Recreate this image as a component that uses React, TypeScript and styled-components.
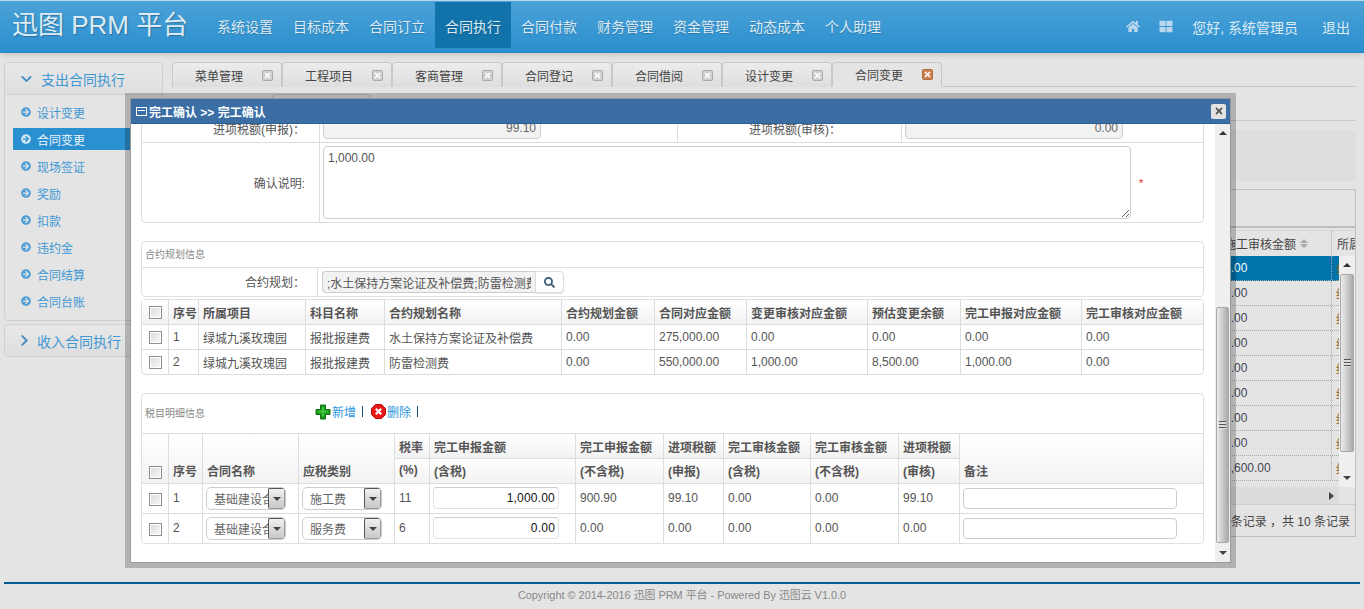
import React from "react";
import styled, { createGlobalStyle } from "styled-components";
import { FaChevronDown, FaChevronRight, FaArrowCircleRight, FaHome, FaThLarge, FaSearch, FaTimes } from "react-icons/fa";

const Global = createGlobalStyle`
  html, body { margin: 0; padding: 0; height: 100%; overflow: hidden; background: #e4e4e4; }
  body, input, textarea { font-family: "Liberation Sans", "Noto Sans CJK SC", sans-serif; font-size: 12px; color: #555; }
  * { box-sizing: border-box; }
`;

const Page = styled.div`
  position: relative; width: 1364px; height: 609px; display: flex; flex-direction: column; overflow: hidden;
`;

/* ---------- header ---------- */
const Header = styled.header`
  height: 53px; flex: none; display: flex; align-items: flex-start; color: #dcebf5;
  border-top: 1px solid #b7d7ec; border-bottom: 1px solid #2388c6;
  background: linear-gradient(#4ba2d7, #2b8fcf);
  box-shadow: 0 2px 6px rgba(0,0,0,.12);
`;
const Logo = styled.div`
  width: 207px; padding: 8px 0 0 12px; font-size: 26px; line-height: 32px; color: #dcebf5; white-space: nowrap;
  text-shadow: 1px 1px 1px rgba(0,0,0,.25);
`;
const Nav = styled.nav`display: flex; margin-top: 1px;`;
const NavItem = styled.a<{ $active?: boolean }>`
  width: 76px; height: 46px; line-height: 50px; text-align: center; font-size: 14px; white-space: nowrap;
  background: ${p => (p.$active ? "#1273aa" : "transparent")};
  text-shadow: 0 1px 1px rgba(0,0,0,.2);
`;
const UserBar = styled.div`
  margin-left: auto; height: 46px; display: flex; align-items: center; gap: 0; font-size: 14px; padding: 5px 14px 0 0;
  svg { color: #b9d8ee; }
`;
const HomeIcon = styled(FaHome)`width: 14px; height: 13px; margin-right: 19px;`;
const GridIcon = styled(FaThLarge)`width: 14px; height: 13px; margin-right: 19px;`;
const Hello = styled.span`margin-right: 24px;`;

/* ---------- main area ---------- */
const Body = styled.div`flex: none; height: 520px; display: flex; padding: 9px 8px 0 4px;`;

const Sidebar = styled.aside`width: 159px; flex: none; display: flex; flex-direction: column; gap: 3px;`;
const Panel = styled.div`border: 1px solid #cfcfcf; border-radius: 4px; overflow: hidden;`;
const PanelHead = styled.div<{ $open?: boolean }>`
  height: ${p => (p.$open ? "32px" : "31px")}; display: flex; align-items: center; font-size: 14px; color: #3f98d4;
  padding-left: 15px;
  background: linear-gradient(#e8e8e8, #dedede);
  ${p => p.$open && "border-bottom: 1px solid #d0d0d0;"}
  svg { color: #4b90c2; flex: none; }
`;
const OpenChevron = styled(FaChevronDown)`width: 13px; height: 12px; margin-right: 8px;`;
const ClosedChevron = styled(FaChevronRight)`width: 9px; height: 13px; margin-right: 8px;`;
const SideList = styled.ul`list-style: none; margin: 0; padding: 6px 0 8px 8px;`;
const SideItem = styled.li<{ $active?: boolean }>`
  height: 22px; margin-bottom: 5px; padding-left: 8px; display: flex; align-items: center; gap: 6px;
  color: ${p => (p.$active ? "#eaf4fb" : "#3f98d4")};
  background: ${p => (p.$active ? "#2a90cf" : "transparent")};
  svg { width: 10px; height: 10px; color: ${p => (p.$active ? "#cfe4f3" : "#4f9fd6")}; flex: none; }
  &:last-child { margin-bottom: 0; }
`;

const Content = styled.main`flex: 1; min-width: 0; margin-left: 9px; display: flex; flex-direction: column;`;
const TabStrip = styled.div`height: 25px; display: flex; border-bottom: 1px solid #c8c8c8; flex: none;`;
const Tab = styled.div<{ $active?: boolean }>`
  width: 110px; height: 25px; display: flex; align-items: center; justify-content: space-between;
  padding: 0 8px 0 22px; color: #444; font-size: 12px;
  border: 1px solid #c8c8c8; border-radius: 4px 4px 0 0;
  ${p => (p.$active
    ? "border-bottom-color: #e4e4e4; background: #e4e4e4;"
    : "border-left-width: 1px; border-bottom: 0; background: linear-gradient(#ececec, #dedede);")}
`;
const SubStrip = styled.div`height: 34px; flex: none; padding: 7px 0 0 100px; border-bottom: 1px solid #c8c8c8;`;
const SubTab = styled.div`width: 98px; height: 26px; border: 1px solid #c8c8c8; border-bottom: 0; border-radius: 4px 4px 0 0;`;
const SearchPanel = styled.div`height: 51px; flex: none; margin-top: 9px; background: #dedede; border-radius: 4px;`;
const GridBox = styled.section`
  margin-top: 8px; height: 348px; flex: none; border: 1px solid #c0c0c0; display: flex; flex-direction: column;
`;
const GridBar = styled.div`height: 38px; flex: none; border-bottom: 2px solid #bdbdbd;`;
const GridHead = styled.div`
  margin-top: 2px; height: 26px; flex: none; display: flex; justify-content: flex-end; align-items: center;
  border-top: 1px solid #d8d8d8; color: #444; white-space: nowrap;
`;
const AmountHead = styled.div`width: 110px; height: 100%; padding-left: 2px; display: flex; align-items: center; gap: 4px; border-right: 1px dotted #aaa;`;
const OwnerHead = styled.div`width: 23px; padding-left: 5px; overflow: hidden;`;
const SortMark = styled.span`
  display: inline-block; width: 8px; height: 9px; position: relative;
  &::before, &::after { content: ""; position: absolute; left: 0; border: 4px solid transparent; }
  &::before { top: -4px; border-bottom-color: #aaa; }
  &::after { bottom: -4px; border-top-color: #aaa; }
`;
const GridBody = styled.div`height: 231px; flex: none; display: flex;`;
const GridRows = styled.div`flex: 1; min-width: 0; overflow: hidden;`;
const GridRow = styled.div<{ $active?: boolean }>`
  height: 25px; display: flex; justify-content: flex-end; align-items: center; border-bottom: 1px dotted #aaa;
  white-space: nowrap; color: ${p => (p.$active ? "#fff" : "#445")};
  background: ${p => (p.$active ? "#0073ad" : "transparent")};
`;
const AmountCell = styled.div`width: 110px; height: 100%; line-height: 24px; padding-left: 2px; border-right: 1px dotted #aaa;`;
const OwnerCell = styled.div`width: 7px; padding-left: 4px; overflow: hidden; color: #8a6a30;`;
const HScroll = styled.div`
  height: 17px; flex: none; width: calc(100% - 16px); background: #dcdcdc; display: flex; justify-content: flex-end; align-items: center; padding-right: 5px;
`;
const GridFoot = styled.div`
  flex: 1; border-top: 1px solid #cfcfcf; display: flex; justify-content: flex-end; align-items: center;
  padding-right: 5px; font-size: 12px; color: #444;
`;

/* ---------- scrollbars ---------- */
const VScroll = styled.div<{ $w: number }>`
  width: ${p => p.$w}px; flex: none; display: flex; flex-direction: column; background: #efefef;
`;
const ScrollBtn = styled.div`height: 18px; flex: none; display: flex; align-items: center; justify-content: center;`;
const Up = styled.i`width: 0; height: 0; border: 4px solid transparent; border-top: 0; border-bottom: 4px solid #333;`;
const Down = styled.i`width: 0; height: 0; border: 4px solid transparent; border-bottom: 0; border-top: 4px solid #444;`;
const Right = styled.i`width: 0; height: 0; border: 4px solid transparent; border-right: 0; border-left: 5px solid #444;`;
const Track = styled.div<{ $before: number }>`flex: 1; padding-top: ${p => p.$before}px; display: flex; flex-direction: column; min-height: 0;`;
const Thumb = styled.div<{ $h: number }>`
  height: ${p => p.$h}px; flex: none; border: 1px solid #a8a8a8; border-radius: 2px; margin: 0 1px;
  display: flex; align-items: center; justify-content: center;
  background: linear-gradient(90deg, #ececec, #c8c8c8 55%, #a9a9a9);
`;
const Grip = styled.i`
  width: 7px; height: 8px;
  background: repeating-linear-gradient(#555 0 1px, #ddd 1px 3px);
`;

/* ---------- dialog ---------- */
const Dialog = styled.div`
  position: absolute; left: 125px; top: 93px; width: 1111px; height: 475px; display: flex; flex-direction: column;
  border: 5px solid rgba(0,0,0,.22); background-clip: padding-box; background-color: #fff;
`;
const DialogFrame = styled.div`flex: 1; min-height: 0; border: 1px solid #999; display: flex; flex-direction: column; background: #fff;`;
const DialogTitle = styled.div`
  height: 25px; flex: none; display: flex; align-items: center; gap: 2px; padding: 0 4px 0 5px;
  background: #3a6ea5; color: #fff; font-weight: bold; border-bottom: 1px solid #2f5f92;
`;
const CloseBtn = styled.div`
  margin-left: auto; width: 15px; height: 15px; border-radius: 2px; background: #e2e2e2; display: flex; align-items: center; justify-content: center;
  svg { width: 10px; height: 10px; color: #555; }
`;
const DialogBody = styled.div`flex: 1; min-height: 0; display: flex;`;
const Scroller = styled.div`flex: 1; min-width: 0; overflow: hidden; padding: 0 11px 0 10px;`;

const FormTable = styled.table`
  width: 1063px; table-layout: fixed; border-collapse: separate; border-spacing: 0;
  border: 1px solid #ddd; border-radius: 0 0 4px 4px; margin-top: -7px;
`;
const FormRow = styled.tr<{ $h: number }>`height: ${p => p.$h}px;`;
const LabelCell = styled.td<{ $pr?: number }>`
  text-align: right; padding-right: ${p => p.$pr ?? 14}px; border-right: 1px solid #ddd; border-bottom: 1px solid #ddd; white-space: nowrap; color: #555;
  tr:first-child > & { padding-bottom: 4px; }
  tr:last-child > & { border-bottom: 0; }
`;
const FieldCell = styled.td`
  padding: 0 3px 3px; border-right: 1px solid #ddd; border-bottom: 1px solid #ddd; white-space: nowrap;
  &:last-child { border-right: 0; }
  tr:last-child > & { border-bottom: 0; padding: 3px 3px; }
`;
const ReadOnlyInput = styled.input<{ $w: number }>`
  display: block; width: ${p => p.$w}px; height: 22px; margin-top: -1px; text-align: right; padding: 0 4px; outline: 0;
  background: #f2f2f2; border: 1px solid #d0d0d0; border-radius: 4px; color: #666;
`;
const NoteRow = styled.div`display: flex; align-items: center;`;
const NoteArea = styled.textarea`
  display: block; width: 808px; height: 73px; padding: 4px; outline: 0; background: #fff; color: #555;
  border: 1px solid #ccc; border-radius: 4px; line-height: 15px;
`;
const Star = styled.span`margin-left: 8px; color: #e22; font-size: 11px;`;

const Section = styled.div<{ $mt: number }>`
  width: 1063px; margin-top: ${p => p.$mt}px; border: 1px solid #e0e0e0; border-radius: 4px;
`;
const SectionHead = styled.div<{ $h: number }>`
  height: ${p => p.$h}px; display: flex; align-items: center; padding: 0 0 2px 3px; font-size: 10px; color: #888;
`;
const PlanRow = styled.div`height: 29px; display: flex; border-top: 1px solid #e0e0e0;`;
const PlanLabel = styled.div`
  width: 176px; flex: none; text-align: right; padding-right: 12px; line-height: 30px; border-right: 1px solid #e0e0e0;
`;
const PlanField = styled.div`display: flex; align-items: center; padding: 3px 0 3px 4px;`;
const PlanInput = styled.input`
  width: 213px; height: 22px; padding: 0 4px; outline: 0; background: #f2f2f2; color: #555;
  border: 1px solid #ccc; border-right: 0; border-radius: 4px 0 0 4px;
`;
const SearchBtn = styled.div`
  width: 29px; height: 22px; display: flex; align-items: center; justify-content: center; background: #fff;
  border: 1px solid #ddd; border-radius: 0 4px 4px 0; box-shadow: 0 1px 1px rgba(0,0,0,.1);
  svg { width: 11px; height: 11px; color: #3a5a70; }
`;

const DataTable = styled.table<{ $inner?: boolean }>`
  width: ${p => (p.$inner ? "1061px" : "1063px")}; table-layout: fixed; border-collapse: separate; border-spacing: 0;
  margin-top: ${p => (p.$inner ? "0" : "2px")};
  ${p => (p.$inner ? "border-top: 1px solid #ddd;" : "border: 1px solid #ddd; border-radius: 4px;")}
`;
const Th = styled.th<{ $bottom?: boolean }>`
  height: 25px; padding: 0 4px; text-align: left; font-weight: bold; color: #555; white-space: nowrap; overflow: hidden;
  vertical-align: ${p => (p.$bottom ? "bottom" : "middle")};
  ${p => p.$bottom && "padding-bottom: 4px;"}
  background: linear-gradient(#fff, #f2f2f2);
  border-right: 1px solid #ddd; border-bottom: 1px solid #ddd;
  &:last-child { border-right: 0; }
`;
const SubTh = styled(Th)`
  padding-bottom: 2px;
  &:last-child { border-right: 1px solid #ddd; }
`;
const Td = styled.td`
  padding: 0 4px; color: #555; white-space: nowrap; overflow: hidden;
  border-right: 1px solid #ddd; border-bottom: 1px solid #ddd;
  &:last-child { border-right: 0; }
  tr:last-child > & { border-bottom: 0; }
`;
const RaisedTd = styled(Td)`padding-bottom: 2px;`;
const Tr = styled.tr<{ $h: number }>`
  height: ${p => p.$h}px;
  &:last-child { height: ${p => p.$h - 1}px; }
`;
const Check = styled.input.attrs({ type: "checkbox" })`
  appearance: none; display: block; width: 13px; height: 13px; margin: 0 0 0 3px;
  border: 1px solid #8e8e8e; background: linear-gradient(135deg, #d9d9d9, #fafafa); box-shadow: inset 0 0 0 1px #fff;
`;
const RowCheck = styled(Check)`margin-top: 2px;`;
const Links = styled.div`display: flex; align-items: center; margin: 0 0 2px 110px; font-size: 12px; color: #2b96dd;`;
const LinkText = styled.span`margin-left: 1px;`;
const Bar = styled.span`width: 1px; height: 11px; background: #14507c; margin: 0 8px 0 6px;`;

const SelectBox = styled.div`
  width: 80px; height: 23px; margin-left: -1px; display: flex; border: 1px solid #ccc; border-radius: 5px; background: #fff; overflow: hidden;
`;
const SelectText = styled.div`flex: 1; min-width: 0; overflow: hidden; padding-left: 7px; line-height: 24px; color: #666; white-space: nowrap;`;
const SelectBtn = styled.div`
  width: 17px; flex: none; display: flex; align-items: center; justify-content: center;
  border: 1px solid #555; border-right-color: #999; border-bottom-color: #999; border-radius: 2px;
  background: linear-gradient(#f0f0f0, #c8c8c8);
`;
const NumberInput = styled.input`
  display: block; width: 126px; height: 22px; padding: 0 3px; text-align: right; outline: 0; color: #111; font-size: 12px; margin: -1px 0 0 -1px;
  border: 1px solid #dde3e8; border-top-color: #ccc; border-radius: 4px; background: #fff; letter-spacing: .2px;
`;
const RemarkInput = styled.input`
  display: block; width: 214px; height: 21px; padding: 0 4px; outline: 0; margin: -1px 0 0 -1px;
  border: 1px solid #ccc; border-radius: 4px; background: #fff;
`;

/* ---------- footer ---------- */
const Footer = styled.footer`
  margin: auto 4px 0; height: 27px; flex: none; border-top: 2px solid #005a94; text-align: center; line-height: 22px;
  font-size: 10.9px; color: #888;
`;

const TabClose = ({ active }: { active?: boolean }) => (
  <svg width="11" height="11" viewBox="0 0 11 11">
    <rect x=".5" y=".5" width="10" height="10" rx="1" fill={active ? "#c9814f" : "#cfcfcf"} stroke={active ? "#b06a38" : "#aaa"} />
    <path d="M3 3l5 5M8 3l-5 5" stroke="#fff" strokeWidth="1.6" />
  </svg>
);
const WinIcon = () => (
  <svg width="11" height="9" viewBox="0 0 11 9">
    <rect x=".5" y=".5" width="10" height="8" fill="none" stroke="#fff" />
    <path d="M2 3.5h7" stroke="#fff" />
  </svg>
);
const PlusIcon = () => (
  <svg width="16" height="16" viewBox="0 0 16 16">
    <path d="M5.5 1h5v4.5H15v5h-4.500V15h-5v-4.500H1v-5h4.500z" fill="#1d9a1d" stroke="#0d6e0d" strokeLinejoin="round" />
    <path d="M7 3h2v3.500h3.500v2H9V12H7V8.500H3.500v-2H7z" fill="#3cc53c" />
  </svg>
);
const DelIcon = () => (
  <svg width="15" height="15" viewBox="0 0 15 15">
    <path d="M4.500.5h6l4 4v6l-4 4h-6l-4-4v-6z" fill="#e81818" stroke="#b80d0d" />
    <path d="M4.800 4.800l5.400 5.400M10.200 4.800l-5.400 5.400" stroke="#fff" strokeWidth="2.200" />
  </svg>
);

const tabs = ["菜单管理", "工程项目", "客商管理", "合同登记", "合同借阅", "设计变更", "合同变更"];
const nav = ["系统设置", "目标成本", "合同订立", "合同执行", "合同付款", "财务管理", "资金管理", "动态成本", "个人助理"];
const side = ["设计变更", "合同变更", "现场签证", "奖励", "扣款", "违约金", "合同结算", "合同台账"];
const amounts = ["0.00", "0.00", "0.00", "0.00", "0.00", "0.00", "0.00", "0.00", "1,600.00"];

const planCols = [27, 30, 107, 79, 177, 93, 92, 121, 93, 121, 121];
const planHead = ["序号", "所属项目", "科目名称", "合约规划名称", "合约规划金额", "合同对应金额", "变更审核对应金额", "预估变更余额", "完工申报对应金额", "完工审核对应金额"];
const planRows = [
  ["1", "绿城九溪玫瑰园", "报批报建费", "水土保持方案论证及补偿费", "0.00", "275,000.00", "0.00", "0.00", "0.00", "0.00"],
  ["2", "绿城九溪玫瑰园", "报批报建费", "防雷检测费", "0.00", "550,000.00", "1,000.00", "8,500.00", "1,000.00", "0.00"],
];
const taxCols = [27, 34, 96, 96, 35, 146, 88, 60, 87, 88, 61, 243];
const taxTop = ["税率", "完工申报金额", "完工申报金额", "进项税额", "完工审核金额", "完工审核金额", "进项税额"];
const taxSub = ["(%)", "(含税)", "(不含税)", "(申报)", "(含税)", "(不含税)", "(审核)"];
const taxRows = [
  { no: "1", type: "施工费", rate: "11", amount: "1,000.00", vals: ["900.90", "99.10", "0.00", "0.00", "99.10"] },
  { no: "2", type: "服务费", rate: "6", amount: "0.00", vals: ["0.00", "0.00", "0.00", "0.00", "0.00"] },
];

const Select = ({ text }: { text: string }) => (
  <SelectBox>
    <SelectText>{text}</SelectText>
    <SelectBtn><Down /></SelectBtn>
  </SelectBox>
);

export default function App() {
  return (
    <Page>
      <Global />
      <Header>
        <Logo>迅图 PRM 平台</Logo>
        <Nav>
          {nav.map(n => <NavItem key={n} $active={n === "合同执行"}>{n}</NavItem>)}
        </Nav>
        <UserBar>
          <HomeIcon />
          <GridIcon />
          <Hello>您好, 系统管理员</Hello>
          <span>退出</span>
        </UserBar>
      </Header>

      <Body>
        <Sidebar>
          <Panel>
            <PanelHead $open><OpenChevron />支出合同执行</PanelHead>
            <SideList>
              {side.map(s => (
                <SideItem key={s} $active={s === "合同变更"}><FaArrowCircleRight />{s}</SideItem>
              ))}
            </SideList>
          </Panel>
          <Panel>
            <PanelHead><ClosedChevron />收入合同执行</PanelHead>
          </Panel>
        </Sidebar>

        <Content>
          <TabStrip>
            {tabs.map((t, i) => (
              <Tab key={t} $active={i === tabs.length - 1}>{t}<TabClose active={i === tabs.length - 1} /></Tab>
            ))}
          </TabStrip>
          <SubStrip><SubTab /></SubStrip>
          <SearchPanel />
          <GridBox>
            <GridBar />
            <GridHead>
              <AmountHead>施工审核金额<SortMark /></AmountHead>
              <OwnerHead>所属</OwnerHead>
            </GridHead>
            <GridBody>
              <GridRows>
                {amounts.map((a, i) => (
                  <GridRow key={i} $active={i === 0}>
                    <AmountCell>{a}</AmountCell>
                    <OwnerCell>绿城九溪玫瑰园</OwnerCell>
                  </GridRow>
                ))}
              </GridRows>
              <VScroll $w={16}>
                <ScrollBtn><Up /></ScrollBtn>
                <Track $before={0}><Thumb $h={178}><Grip /></Thumb></Track>
                <ScrollBtn><Down /></ScrollBtn>
              </VScroll>
            </GridBody>
            <HScroll><Right /></HScroll>
            <GridFoot>条记录 ，共 10 条记录</GridFoot>
          </GridBox>
        </Content>
      </Body>

      <Footer>Copyright © 2014-2016 迅图 PRM 平台 - Powered By 迅图云 V1.0.0</Footer>

      <Dialog>
        <DialogFrame>
          <DialogTitle>
            <WinIcon />
            <span>完工确认 &gt;&gt; 完工确认</span>
            <CloseBtn><FaTimes /></CloseBtn>
          </DialogTitle>
          <DialogBody>
            <Scroller>
              <FormTable>
                <colgroup><col width={178} /><col width={358} /><col width={224} /><col width={301} /></colgroup>
                <tbody>
                  <FormRow $h={24}>
                    <LabelCell>进项税额(申报)：</LabelCell>
                    <FieldCell><ReadOnlyInput $w={218} readOnly value="99.10" /></FieldCell>
                    <LabelCell $pr={60}>进项税额(审核)：</LabelCell>
                    <FieldCell><ReadOnlyInput $w={218} readOnly value="0.00" /></FieldCell>
                  </FormRow>
                  <FormRow $h={79}>
                    <LabelCell>确认说明:</LabelCell>
                    <FieldCell colSpan={3}>
                      <NoteRow>
                        <NoteArea readOnly value="1,000.00" />
                        <Star>*</Star>
                      </NoteRow>
                    </FieldCell>
                  </FormRow>
                </tbody>
              </FormTable>

              <Section $mt={18}>
                <SectionHead $h={25}>合约规划信息</SectionHead>
                <PlanRow>
                  <PlanLabel>合约规划：</PlanLabel>
                  <PlanField>
                    <PlanInput readOnly value=";水土保持方案论证及补偿费;防雷检测费" />
                    <SearchBtn><FaSearch /></SearchBtn>
                  </PlanField>
                </PlanRow>
              </Section>

              <DataTable>
                <colgroup>{planCols.map((w, i) => <col key={i} width={w} />)}</colgroup>
                <thead>
                  <tr>
                    <Th><Check /></Th>
                    {planHead.map(h => <Th key={h}>{h}</Th>)}
                  </tr>
                </thead>
                <tbody>
                  {planRows.map(r => (
                    <Tr key={r[0]} $h={25}>
                      <Td><Check /></Td>
                      {r.map((c, i) => <Td key={i}>{c}</Td>)}
                    </Tr>
                  ))}
                </tbody>
              </DataTable>

              <Section $mt={18}>
                <SectionHead $h={39}>
                  税目明细信息
                  <Links>
                    <PlusIcon /><LinkText>新增</LinkText><Bar />
                    <DelIcon /><LinkText>删除</LinkText><Bar />
                  </Links>
                </SectionHead>
                <DataTable $inner>
                  <colgroup>{taxCols.map((w, i) => <col key={i} width={w} />)}</colgroup>
                  <thead>
                    <tr>
                      <Th rowSpan={2} $bottom><Check /></Th>
                      <Th rowSpan={2} $bottom>序号</Th>
                      <Th rowSpan={2} $bottom>合同名称</Th>
                      <Th rowSpan={2} $bottom>应税类别</Th>
                      {taxTop.map((h, i) => <Th key={i}>{h}</Th>)}
                      <Th rowSpan={2} $bottom>备注</Th>
                    </tr>
                    <tr>
                      {taxSub.map((h, i) => <SubTh key={i}>{h}</SubTh>)}
                    </tr>
                  </thead>
                  <tbody>
                    {taxRows.map(r => (
                      <Tr key={r.no} $h={30}>
                        <Td><RowCheck /></Td>
                        <RaisedTd>{r.no}</RaisedTd>
                        <Td><Select text="基础建设合同" /></Td>
                        <Td><Select text={r.type} /></Td>
                        <RaisedTd>{r.rate}</RaisedTd>
                        <Td><NumberInput readOnly value={r.amount} /></Td>
                        {r.vals.map((v, i) => <RaisedTd key={i}>{v}</RaisedTd>)}
                        <Td><RemarkInput readOnly value="" /></Td>
                      </Tr>
                    ))}
                  </tbody>
                </DataTable>
              </Section>
            </Scroller>
            <VScroll $w={15}>
              <ScrollBtn><Up /></ScrollBtn>
              <Track $before={165}><Thumb $h={236}><Grip /></Thumb></Track>
              <ScrollBtn><Down /></ScrollBtn>
            </VScroll>
          </DialogBody>
        </DialogFrame>
      </Dialog>
    </Page>
  );
}
